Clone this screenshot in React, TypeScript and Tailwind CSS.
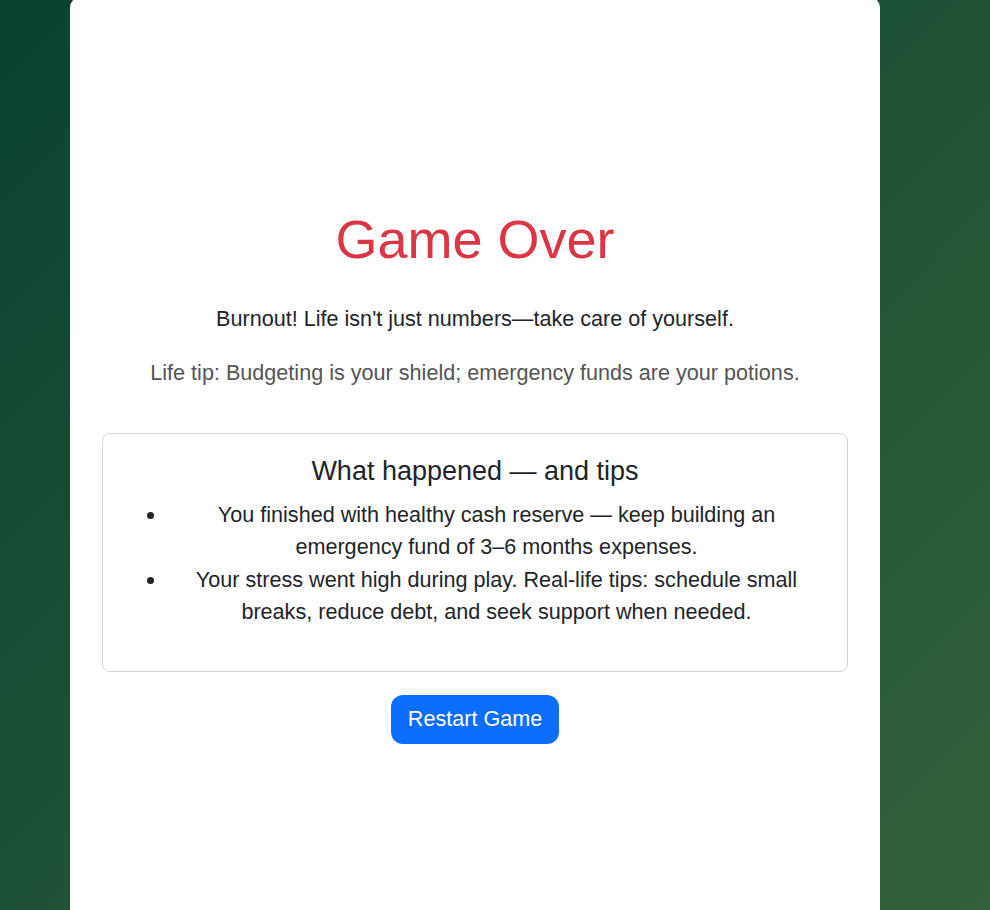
export default function App() {
  return (
    <div
      className="h-[910px] overflow-hidden bg-[linear-gradient(135deg,#0b4131_0%,#32623a_100%)] text-[#212529]"
      style={{ fontFamily: '"Liberation Sans", Arial, sans-serif' }}
    >
      <div className="ml-[70px] -mt-1 w-[810px] h-[930px] rounded-xl bg-white px-8 pt-[211px] text-center">
        <h1 className="text-[54px] leading-[1.2] text-[#dc3545]">Game Over</h1>
        <p className="mt-[31px] text-[21.6px] leading-[1.5]">
          Burnout! Life isn't just numbers—take care of yourself.
        </p>
        <p className="mt-[22px] text-[21.6px] leading-[1.5] text-[#555]">
          Life tip: Budgeting is your shield; emergency funds are your potions.
        </p>

        <div className="mt-[43px] h-[239px] rounded-lg border border-[#d5d5d5] px-[21px] pt-[17px]">
          <h2 className="text-[27px] leading-[1.5]">What happened — and tips</h2>
          <ul className="mt-[8px] list-disc pl-[43px] text-[21.6px] leading-[1.5]">
            <li>
              You finished with healthy cash reserve — keep building an emergency fund of 3–6 months expenses.
            </li>
            <li>
              Your stress went high during play. Real-life tips: schedule small breaks, reduce debt, and seek support when needed.
            </li>
          </ul>
        </div>

        <button className="mt-[23px] h-[49px] rounded-xl bg-[#0d6efd] px-[17px] text-[21.6px] text-white">
          Restart Game
        </button>
      </div>
    </div>
  );
}
